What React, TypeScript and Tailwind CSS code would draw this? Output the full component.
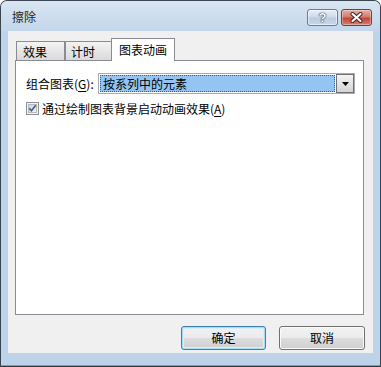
import React from "react";

function Checkbox() {
  return (
    <svg width="13" height="13" viewBox="0 0 13 13" className="shrink-0">
      <defs>
        <linearGradient id="cbg" x1="0" y1="0" x2="1" y2="1">
          <stop offset="0" stopColor="#cbd0d6" />
          <stop offset="1" stopColor="#f7f7f7" />
        </linearGradient>
      </defs>
      <rect x="0.5" y="0.5" width="12" height="12" fill="#f4f4f4" stroke="#8e8f8f" />
      <rect x="2.5" y="2.5" width="8" height="8" fill="url(#cbg)" stroke="#b4b9c0" strokeWidth="1" />
      <path d="M3.2 6.3 L5.4 8.8 L9.8 3.3" stroke="#4b5f8e" strokeWidth="1.7" fill="none" />
    </svg>
  );
}

export default function App() {
  return (
    <div className="w-[381px] h-[367px] bg-white text-[12px] text-black font-['Noto_Sans_CJK_SC','Microsoft_YaHei',sans-serif] leading-none">
      <div className="w-full h-full flex flex-col rounded-t-[7px] border border-b-0 border-[#3a4552] bg-[#bcd3ea] overflow-hidden">
        {/* title bar */}
        <div className="h-[30px] flex items-start justify-between pl-[11px] pr-[8px] bg-gradient-to-b from-[#d9e5f2] to-[#c3d6eb]">
          <div className="pt-[10px] text-[12px] text-[#1e1e1e]">擦除</div>
          <div className="flex gap-[3px] pt-[8px]">
            <div className="w-[31px] h-[17px] rounded-[3px] border border-[#6a7b94] bg-[linear-gradient(to_bottom,#e6edf6_0%,#cfdcec_45%,#b8cce3_55%,#c7d8ec_100%)] shadow-[inset_0_0_0_1px_rgba(255,255,255,0.55)] flex items-center justify-center">
              <span className="text-[13px] font-bold text-white font-['Liberation_Sans',sans-serif] [text-shadow:0_0_1px_#23344d,0_0_1px_#23344d,0_0_1px_#23344d]">?</span>
            </div>
            <div className="w-[31px] h-[17px] rounded-[3px] border border-[#7d3b33] bg-[linear-gradient(to_bottom,#e5b0a5_0%,#d47b6c_45%,#c2453a_55%,#d28270_100%)] shadow-[inset_0_0_0_1px_rgba(255,255,255,0.35)] flex items-center justify-center">
              <svg width="13" height="11" viewBox="0 0 13 11">
                <path d="M2.5 2 L10.5 9 M10.5 2 L2.5 9" stroke="#4a1d18" strokeWidth="4" strokeLinecap="round" />
                <path d="M2.5 2 L10.5 9 M10.5 2 L2.5 9" stroke="#ffffff" strokeWidth="2.2" strokeLinecap="round" />
              </svg>
            </div>
          </div>
        </div>

        {/* middle */}
        <div className="flex h-[322px]">
          <div className="w-[7px]" />
          <div className="w-[365px] h-[322px] bg-[#f0f0f0] pl-[7px] pt-[7px]">
            {/* tabs */}
            <div className="flex items-end h-[22px] ml-[1px]">
              <div className="w-[49px] h-[19px] border border-b-0 border-[#898c95] bg-gradient-to-b from-[#f3f3f3] to-[#dadada] pl-[6px] pt-[4px]">
                效果
              </div>
              <div className="w-[46px] h-[19px] border border-b-0 border-r-0 border-[#898c95] bg-gradient-to-b from-[#f3f3f3] to-[#dadada] pl-[5px] pt-[4px]">
                计时
              </div>
              <div className="relative z-10 -mb-[1px] w-[64px] h-[23px] border border-b-0 border-[#898c95] bg-white pl-[7px] pt-[5px]">
                图表动画
              </div>
            </div>
            {/* panel */}
            <div className="w-[349px] h-[255px] border border-[#898c95] bg-white pt-[12px] pl-[10px]">
              <div className="flex items-center h-[21px]">
                <div className="w-[72px]">
                  组合图表(<span className="underline underline-offset-2">G</span>):
                </div>
                <div className="w-[257px] h-[21px] border border-[#a9abb2] flex items-center">
                  <div className="ml-[1px] w-[235px] h-[17px] bg-[#93c4f3] border border-dotted border-[#7a4c20] flex items-center pl-[2px]">
                    按系列中的元素
                  </div>
                  <div className="ml-[1px] w-[18px] h-[19px] border border-[#707070] bg-gradient-to-b from-[#f4f4f4] to-[#d3d3d3] flex items-center justify-center">
                    <svg width="7" height="4" viewBox="0 0 7 4">
                      <path d="M0 0 L7 0 L3.5 4 Z" fill="#000" />
                    </svg>
                  </div>
                </div>
              </div>
              <div className="flex items-center h-[13px] mt-[8px]">
                <Checkbox />
                <div className="ml-[3px]">
                  通过绘制图表背景启动动画效果(<span className="underline underline-offset-2">A</span>)
                </div>
              </div>
            </div>
            {/* buttons */}
            <div className="flex justify-end gap-[13px] mt-[11px] pr-[8px]">
              <div className="w-[85px] h-[24px] rounded-[3px] border border-[#3c7fb1] bg-[linear-gradient(to_bottom,#f2f2f2_0%,#ebebeb_50%,#dddddd_50%,#cfcfcf_100%)] shadow-[inset_0_0_0_1px_#a5dcf6,inset_0_0_0_2px_#d5effb] flex items-center justify-center">
                确定
              </div>
              <div className="w-[86px] h-[24px] rounded-[3px] border border-[#707070] bg-[linear-gradient(to_bottom,#f2f2f2_0%,#ebebeb_50%,#dddddd_50%,#cfcfcf_100%)] shadow-[inset_0_0_0_1px_#fbfbfb] flex items-center justify-center">
                取消
              </div>
            </div>
          </div>
          <div className="w-[7px]" />
        </div>

        <div className="h-[12px]" />
        <div className="h-[1px] bg-[#4db5c8]" />
        <div className="h-[1px] bg-[#2d3540]" />
      </div>
    </div>
  );
}
